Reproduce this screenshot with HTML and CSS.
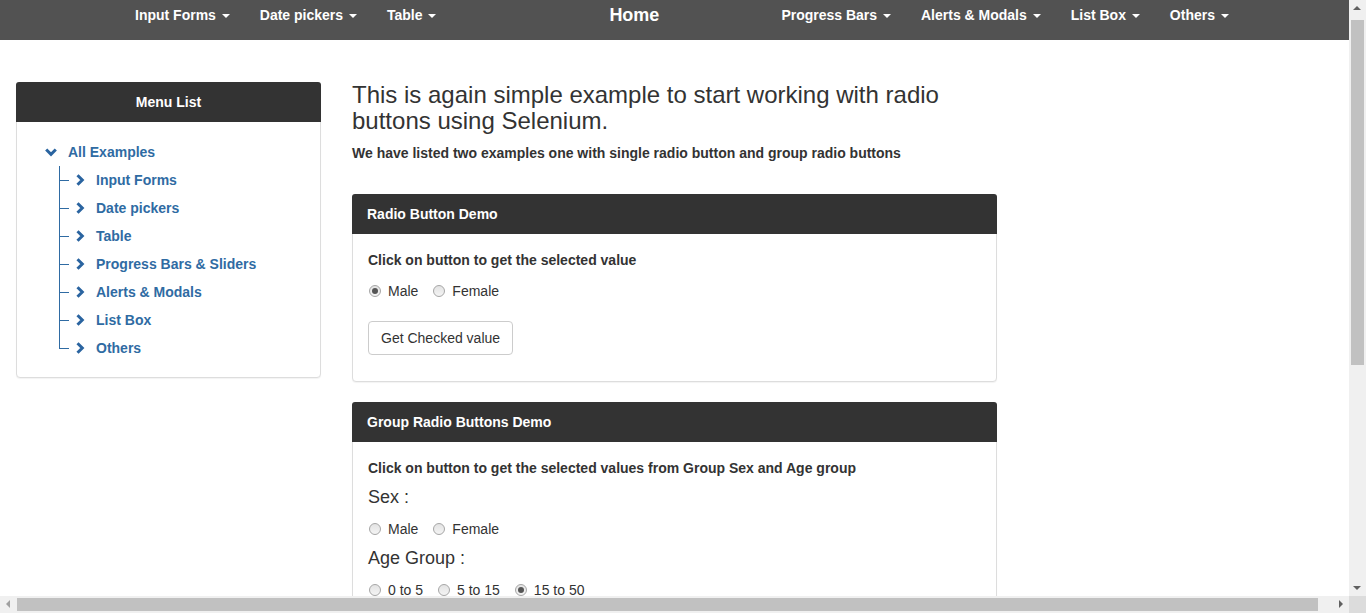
FILE: index.html
```html
<!DOCTYPE html>
<html lang="en">
<head>
<meta charset="utf-8">
<title>Radio buttons demo</title>
<link rel="stylesheet" href="styles.css">
</head>
<body>
<nav class="topbar">
  <ul class="nav-group nav-left">
    <li class="nav-item">Input Forms <span class="caret"></span></li>
    <li class="nav-item">Date pickers <span class="caret"></span></li>
    <li class="nav-item">Table <span class="caret"></span></li>
  </ul>
  <div class="brand">Home</div>
  <ul class="nav-group nav-right">
    <li class="nav-item">Progress Bars <span class="caret"></span></li>
    <li class="nav-item">Alerts &amp; Modals <span class="caret"></span></li>
    <li class="nav-item">List Box <span class="caret"></span></li>
    <li class="nav-item">Others <span class="caret"></span></li>
  </ul>
</nav>

<div class="page">
  <aside class="sidebar panel">
    <div class="panel-heading center">Menu List</div>
    <div class="menu-body">
      <div class="tree-root">
        <svg class="chev-down" width="12" height="9" viewBox="0 0 12 9"><polyline points="1.2,1.5 6,6.3 10.8,1.5" fill="none" stroke="currentColor" stroke-width="3"/></svg>
        <span class="tree-text">All Examples</span>
      </div>
      <ul class="tree-children">
        <li class="tree-item"><svg class="chev-right" width="9" height="12" viewBox="0 0 9 12"><polyline points="1.5,1.2 6.3,6 1.5,10.8" fill="none" stroke="currentColor" stroke-width="3"/></svg><span class="tree-text">Input Forms</span></li>
        <li class="tree-item"><svg class="chev-right" width="9" height="12" viewBox="0 0 9 12"><polyline points="1.5,1.2 6.3,6 1.5,10.8" fill="none" stroke="currentColor" stroke-width="3"/></svg><span class="tree-text">Date pickers</span></li>
        <li class="tree-item"><svg class="chev-right" width="9" height="12" viewBox="0 0 9 12"><polyline points="1.5,1.2 6.3,6 1.5,10.8" fill="none" stroke="currentColor" stroke-width="3"/></svg><span class="tree-text">Table</span></li>
        <li class="tree-item"><svg class="chev-right" width="9" height="12" viewBox="0 0 9 12"><polyline points="1.5,1.2 6.3,6 1.5,10.8" fill="none" stroke="currentColor" stroke-width="3"/></svg><span class="tree-text">Progress Bars &amp; Sliders</span></li>
        <li class="tree-item"><svg class="chev-right" width="9" height="12" viewBox="0 0 9 12"><polyline points="1.5,1.2 6.3,6 1.5,10.8" fill="none" stroke="currentColor" stroke-width="3"/></svg><span class="tree-text">Alerts &amp; Modals</span></li>
        <li class="tree-item"><svg class="chev-right" width="9" height="12" viewBox="0 0 9 12"><polyline points="1.5,1.2 6.3,6 1.5,10.8" fill="none" stroke="currentColor" stroke-width="3"/></svg><span class="tree-text">List Box</span></li>
        <li class="tree-item last"><svg class="chev-right" width="9" height="12" viewBox="0 0 9 12"><polyline points="1.5,1.2 6.3,6 1.5,10.8" fill="none" stroke="currentColor" stroke-width="3"/></svg><span class="tree-text">Others</span></li>
      </ul>
    </div>
  </aside>

  <main class="main">
    <h3 class="lead-title">This is again simple example to start working with radio buttons using Selenium.</h3>
    <p class="intro">We have listed two examples one with single radio button and group radio buttons</p>

    <section class="panel demo">
      <div class="panel-heading">Radio Button Demo</div>
      <div class="panel-body">
        <p class="label-bold">Click on button to get the selected value</p>
        <div class="radio-row">
          <label class="radio-opt"><span class="radio checked"></span>Male</label>
          <label class="radio-opt"><span class="radio"></span>Female</label>
        </div>
        <button class="btn">Get Checked value</button>
      </div>
    </section>

    <section class="panel demo">
      <div class="panel-heading">Group Radio Buttons Demo</div>
      <div class="panel-body">
        <p class="label-bold">Click on button to get the selected values from Group Sex and Age group</p>
        <h4 class="group-title">Sex :</h4>
        <div class="radio-row">
          <label class="radio-opt"><span class="radio"></span>Male</label>
          <label class="radio-opt"><span class="radio"></span>Female</label>
        </div>
        <h4 class="group-title">Age Group :</h4>
        <div class="radio-row">
          <label class="radio-opt"><span class="radio"></span>0 to 5</label>
          <label class="radio-opt"><span class="radio"></span>5 to 15</label>
          <label class="radio-opt"><span class="radio checked"></span>15 to 50</label>
        </div>
      </div>
    </section>
  </main>
</div>

<div class="vscroll">
  <span class="arrow-up"></span>
  <span class="vthumb"></span>
  <span class="arrow-down"></span>
</div>
<div class="hscroll">
  <span class="arrow-left"></span>
  <span class="hthumb"></span>
  <span class="arrow-right"></span>
</div>
<div class="scroll-corner"></div>
</body>
</html>
```

FILE: styles.css
```css
html, body {
  margin: 0;
  padding: 0;
  overflow: hidden;
  height: 100%;
}
body {
  font-family: "Liberation Sans", Arial, sans-serif;
  font-size: 14px;
  line-height: 20px;
  color: #333;
  background: #fff;
}
ul { list-style: none; margin: 0; padding: 0; }

/* ---------- top navbar ---------- */
.topbar {
  display: flex;
  align-items: flex-start;
  height: 40px;
  width: 1349px;
  background: #525252;
  color: #fff;
  font-weight: bold;
}
.nav-group { display: flex; }
.nav-left { margin-left: 120px; }
.nav-item {
  padding: 5px 15px 0;
  line-height: 20px;
  white-space: nowrap;
}
.caret {
  display: inline-block;
  width: 0;
  height: 0;
  margin-left: 2px;
  vertical-align: middle;
  border-top: 4px solid #fff;
  border-left: 4px solid transparent;
  border-right: 4px solid transparent;
}
.brand {
  margin-left: 143px;
  padding: 5px 15px 0;
  font-size: 18px;
  line-height: 20px;
}
.nav-right { margin-left: 92px; }

/* ---------- page layout ---------- */
.page {
  display: flex;
  align-items: flex-start;
  gap: 31px;
  padding: 42px 0 0 16px;
}
.panel {
  background: #fff;
  border: 1px solid #ddd;
  border-radius: 4px;
  box-shadow: 0 1px 1px rgba(0,0,0,.05);
}
.panel-heading {
  height: 40px;
  line-height: 40px;
  padding: 0 15px;
  background: #333;
  color: #fff;
  font-weight: bold;
  border-radius: 3px 3px 0 0;
  margin: -1px -1px 0;
}
.panel-heading.center { text-align: center; }

/* ---------- sidebar tree ---------- */
.sidebar { width: 303px; }
.menu-body {
  padding: 16px 0 15px;
  color: #2f6ba3;
  font-weight: bold;
}
.tree-root {
  display: flex;
  align-items: center;
  height: 28px;
  padding-left: 28px;
}
.chev-down { margin-right: 11px; }
.tree-children { margin-left: 42px; }
.tree-item {
  position: relative;
  display: flex;
  align-items: center;
  height: 28px;
  padding-left: 17px;
}
.tree-item::before {
  content: "";
  position: absolute;
  left: 0;
  top: 0;
  bottom: 0;
  width: 1px;
  background: #2f6ba3;
}
.tree-item.last::before { bottom: 50%; }
.tree-item::after {
  content: "";
  position: absolute;
  left: 0;
  top: 50%;
  width: 10px;
  height: 1px;
  background: #2f6ba3;
}
.chev-right { margin-right: 11px; color: #2a64a0; }
.chev-down { color: #2a64a0; }

/* ---------- main ---------- */
.main { width: 645px; }
.lead-title {
  margin: 0;
  font-size: 24px;
  line-height: 26px;
  font-weight: normal;
  color: #333;
}
.intro {
  margin: 9px 0 0;
  font-weight: bold;
}
.demo { margin-top: 31px; }
.demo + .demo { margin-top: 20px; }
.panel-body { padding: 16px 15px 26px; }
.label-bold {
  margin: 0;
  font-weight: bold;
}
.radio-row {
  display: flex;
  align-items: center;
  height: 20px;
  margin-top: 11px;
}
.radio-opt {
  display: flex;
  align-items: center;
  margin-right: 14px;
}
.radio {
  display: inline-block;
  box-sizing: border-box;
  width: 12px;
  height: 12px;
  margin: 0 7px 0 1px;
  border: 1px solid #a6a6a6;
  border-radius: 50%;
  background: linear-gradient(#e3e3e3, #f4f4f4);
  position: relative;
}
.radio.checked::after {
  content: "";
  position: absolute;
  left: 2px;
  top: 2px;
  width: 6px;
  height: 6px;
  border-radius: 50%;
  background: #555;
}
.btn {
  margin-top: 20px;
  height: 34px;
  padding: 6px 12px;
  font-family: inherit;
  font-size: 14px;
  line-height: 20px;
  color: #333;
  background: #fff;
  border: 1px solid #ccc;
  border-radius: 4px;
}
.group-title {
  margin: 9px 0 0;
  font-size: 18px;
  font-weight: normal;
  line-height: 20px;
}
.group-title + .radio-row { margin-top: 12px; }
.radio-row + .group-title { margin-top: 9px; }

/* ---------- fake browser scrollbars (overlay) ---------- */
.vscroll {
  position: fixed;
  top: 0;
  right: 0;
  width: 17px;
  height: 596px;
  background: #f0f0f0;
}
.vthumb {
  position: absolute;
  left: 2px;
  top: 20px;
  width: 13px;
  height: 345px;
  background: #c1c1c1;
}
.arrow-up, .arrow-down, .arrow-left, .arrow-right {
  position: absolute;
  width: 0;
  height: 0;
}
.arrow-up {
  left: 4px;
  top: 6px;
  border-left: 4px solid transparent;
  border-right: 4px solid transparent;
  border-bottom: 4px solid #606060;
}
.arrow-down {
  left: 4px;
  bottom: 6px;
  border-left: 4px solid transparent;
  border-right: 4px solid transparent;
  border-top: 4px solid #606060;
}
.hscroll {
  position: fixed;
  left: 0;
  bottom: 0;
  width: 1349px;
  height: 17px;
  background: #f0f0f0;
}
.hthumb {
  position: absolute;
  left: 17px;
  top: 2px;
  width: 1301px;
  height: 13px;
  background: #c1c1c1;
}
.arrow-left {
  left: 6px;
  top: 4px;
  border-top: 4px solid transparent;
  border-bottom: 4px solid transparent;
  border-right: 4px solid #a0a0a0;
}
.arrow-right {
  right: 6px;
  top: 4px;
  border-top: 4px solid transparent;
  border-bottom: 4px solid transparent;
  border-left: 4px solid #606060;
}
.scroll-corner {
  position: fixed;
  right: 0;
  bottom: 0;
  width: 17px;
  height: 17px;
  background: #dcdcdc;
}
```
